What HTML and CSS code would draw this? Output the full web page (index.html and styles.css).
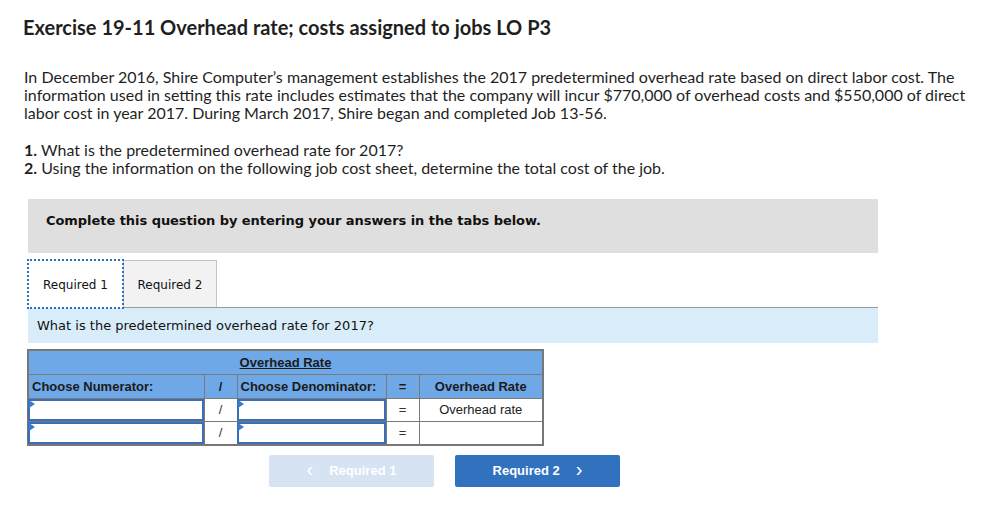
FILE: index.html
```html
<!DOCTYPE html>
<html>
<head>
<meta charset="utf-8">
<link rel="stylesheet" href="styles.css">
</head>
<body>
<div class="page">
  <h1 class="title">Exercise 19-11 Overhead rate; costs assigned to jobs LO P3</h1>
  <p class="intro">In December 2016, Shire Computer’s management establishes the 2017 predetermined overhead rate based on direct labor cost. The information used in setting this rate includes estimates that the company will incur $770,000 of overhead costs and $550,000 of direct labor cost in year 2017. During March 2017, Shire began and completed Job 13-56.</p>
  <p class="tasks"><b>1.</b> What is the predetermined overhead rate for 2017?<br><b>2.</b> Using the information on the following job cost sheet, determine the total cost of the job.</p>

  <div class="widget">
    <div class="banner">Complete this question by entering your answers in the tabs below.</div>
    <div class="tabs">
      <div class="tab active">Required 1</div>
      <div class="tab">Required 2</div>
    </div>
    <div class="prompt">What is the predetermined overhead rate for 2017?</div>

    <table class="grid">
      <tr class="head">
        <th colspan="5" class="caption"><u>Overhead Rate</u></th>
      </tr>
      <tr class="head">
        <th class="c-num left">Choose Numerator:</th>
        <th class="c-op">/</th>
        <th class="c-den left">Choose Denominator:</th>
        <th class="c-op">=</th>
        <th class="c-res">Overhead Rate</th>
      </tr>
      <tr>
        <td class="in"><div class="box"></div></td>
        <td class="op">/</td>
        <td class="in"><div class="box"></div></td>
        <td class="op">=</td>
        <td class="res">Overhead rate</td>
      </tr>
      <tr>
        <td class="in"><div class="box"></div></td>
        <td class="op">/</td>
        <td class="in"><div class="box"></div></td>
        <td class="op">=</td>
        <td class="res"></td>
      </tr>
    </table>

    <div class="nav">
      <div class="btn prev"><span class="chev">&lsaquo;</span>Required 1</div>
      <div class="btn next">Required 2<span class="chev">&rsaquo;</span></div>
    </div>
  </div>
</div>
</body>
</html>
```
FILE: styles.css
```css
* { box-sizing: border-box; }
html, body { margin: 0; padding: 0; background: #fff; }
body { font-family: "Lato", "Open Sans", sans-serif; color: #1f1f1f; }
.page { padding: 16px 0 0 24px; width: 984px; }
.title {
  margin: 0;
  font-size: 20px;
  line-height: 22px;
  font-weight: 700;
  margin-left: -1px;
}
.intro {
  margin: 30px 0 0 0;
  font-size: 16px;
  line-height: 18px;
  width: 945px;
}
.tasks {
  margin: 19px 0 0 0;
  font-size: 16px;
  line-height: 18px;
}
.widget { margin-left: 4px; width: 850px; }
.banner {
  margin-top: 22px;
  height: 54px;
  background: #dfdfdf;
  font-family: "DejaVu Sans", Verdana, sans-serif;
  font-weight: 700;
  font-size: 13px;
  letter-spacing: -0.05px;
  color: #111;
  padding: 14px 0 0 18px;
}
.tabs {
  margin-top: 7px;
  display: flex;
  height: 48px;
  border-bottom: 1px solid #9a9a9a;
  align-items: flex-end;
}
.tab {
  font-family: "DejaVu Sans", Verdana, sans-serif;
  font-size: 12px;
  color: #111;
  height: 47px;
  display: flex;
  align-items: center;
  justify-content: center;
  padding-top: 1px;
}
.tab.active {
  width: 95px;
  background: #fff;
  outline: 2px dotted #2f6fc0;
  outline-offset: -1px;
  height: 48px;
  margin-bottom: -1px;
  position: relative;
}
.tab:not(.active) {
  width: 94px;
  background: #f2f2f2;
  border: 1px solid #c4c4c4;
  border-bottom: none;
}
.prompt {
  height: 35px;
  background: #d8edf9;
  font-family: "DejaVu Sans", Verdana, sans-serif;
  font-size: 13px;
  color: #111;
  padding: 10px 0 0 9px;
}
.grid {
  margin: 6px 0 0 -1px;
  border-collapse: collapse;
  border: 2px solid #777;
  font-family: "Liberation Sans", Arial, sans-serif;
  font-size: 13px;
  color: #222;
}
.grid th, .grid td {
  border: 1px solid #7a7a7a;
  padding: 0;
}
.grid tr.head th {
  background: #6fa8e6;
  height: 24px;
  font-weight: 700;
  color: #1b1b1b;
}
.grid th.caption { text-align: center; }
.grid th.left { text-align: left; padding-left: 3px; }
.c-num { width: 176px; }
.c-op { width: 33px; text-align: center; }
.c-den { width: 149px; }
.c-res { width: 124px; text-align: center; }
.grid td { height: 23px; background: #fff; }
.grid td.op { text-align: center; color: #333; }
.grid td.res { text-align: center; }
.grid td.in { padding: 0; }
.box {
  height: 22px;
  border: 2px solid #3a6fb5;
  margin-left: -1px;
  position: relative;
  background: #fff;
}
.box::before {
  content: "";
  position: absolute;
  left: -1px;
  top: -1px;
  border-left: 6px solid #3a7bd0;
  border-top: 4px solid transparent;
  border-bottom: 4px solid transparent;
}
.nav {
  display: flex;
  gap: 21px;
  margin: 9px 0 0 241px;
}
.btn {
  width: 165px;
  height: 32px;
  border-radius: 2px;
  color: #fff;
  font-family: "Liberation Sans", Arial, sans-serif;
  font-weight: 700;
  font-size: 13px;
  display: flex;
  align-items: center;
  justify-content: center;
}
.btn.prev { background: #d6e3f3; }
.btn.next { background: #3172bf; }
.chev { font-size: 20px; font-weight: 400; line-height: 1; position: relative; top: -2px; }
.prev .chev { margin-right: 16px; }
.next .chev { margin-left: 16px; }
```
